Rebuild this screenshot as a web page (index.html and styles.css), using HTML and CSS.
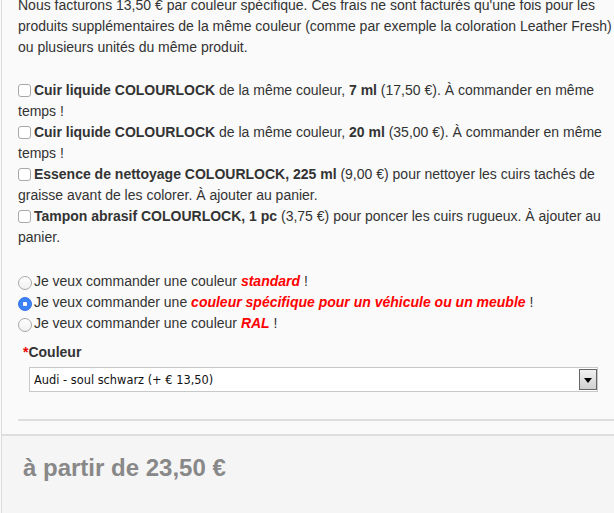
FILE: index.html
```html
<!DOCTYPE html>
<html lang="fr">
<head>
    <meta charset="UTF-8">
    <meta name="viewport" content="width=device-width, initial-scale=1.0">
    <title>Couleur spécifique</title>
    <link rel="stylesheet" href="styles.css">
</head>
<body>

    <div class="page">
        <!-- Options du produit -->
        <div class="options">
            <p class="intro">Nous facturons 13,50 € par couleur spécifique. Ces frais ne sont facturés qu'une fois pour les produits supplémentaires de la même couleur (comme par exemple la coloration Leather Fresh) ou plusieurs unités du même produit.</p>

            <div class="extras">
                <label><input type="checkbox"> <b>Cuir liquide COLOURLOCK</b> de la même couleur, <b>7 ml</b> (17,50 €). À commander en même temps !</label>
                <label><input type="checkbox"> <b>Cuir liquide COLOURLOCK</b> de la même couleur, <b>20 ml</b> (35,00 €). À commander en même temps !</label>
                <label><input type="checkbox"> <b>Essence de nettoyage COLOURLOCK, 225 ml</b> (9,00 €) pour nettoyer les cuirs tachés de graisse avant de les colorer. À ajouter au panier.</label>
                <label><input type="checkbox"> <b>Tampon abrasif COLOURLOCK, 1 pc</b> (3,75 €) pour poncer les cuirs rugueux. À ajouter au panier.</label>
            </div>

            <div class="choix">
                <label><input type="radio" name="type"> Je veux commander une couleur <em>standard</em> !</label>
                <label><input type="radio" name="type" checked> Je veux commander une <em>couleur spécifique pour un véhicule ou un meuble</em> !</label>
                <label><input type="radio" name="type"> Je veux commander une couleur <em>RAL</em> !</label>
            </div>

            <div class="champ">
                <div class="champ-titre"><span class="requis">*</span>Couleur</div>
                <div class="select-box">
                    <select>
                        <option>Audi - soul schwarz (+ € 13,50)</option>
                    </select>
                    <span class="select-btn"></span>
                </div>
            </div>

            <div class="separateur"></div>
        </div>

        <!-- Prix -->
        <div class="prix">
            <h2>à partir de 23,50 €</h2>
            <p class="prix-note">incl. TVA, plus frais d'expédition</p>
        </div>
    </div>

</body>
</html>
```

FILE: styles.css
```css
/* Estilos generales */
* {
    box-sizing: border-box;
}

body {
    font-family: "Liberation Sans", Arial, sans-serif;
    font-size: 14px;
    line-height: 21px;
    color: #333;
    margin: 0;
    padding: 0;
    background-color: #fafafa;
    overflow: hidden;
    height: 513px;
}

.page {
    width: 640px;
    margin-left: 1px;
    margin-top: -5px;
    border-left: 1px solid #dcdcdc;
}

.options {
    padding: 0 0 0 16px;
    background-color: #fafafa;
}

.intro {
    margin: 0 0 22px;
    width: 600px;
}

.extras label,
.choix label {
    display: block;
    width: 600px;
}

.extras {
    margin-bottom: 23px;
}

input[type="checkbox"] {
    appearance: none;
    width: 13px;
    height: 13px;
    margin: 0 -1px 0 0;
    border: 1px solid #a8a8a8;
    border-radius: 3px;
    background: #fff;
    vertical-align: -2px;
}

input[type="radio"] {
    appearance: none;
    width: 14px;
    height: 14px;
    margin: 0 -2px 0 0;
    border: 1px solid #a8a8a8;
    border-radius: 50%;
    background: linear-gradient(#fff, #f0f0f0);
    vertical-align: -4px;
}

input[type="radio"]:checked {
    border-color: #2f74e8;
    background: radial-gradient(circle, #fff 0 2px, #3b82f6 2.5px);
}

em {
    color: #f00;
    font-weight: bold;
}

.champ {
    padding: 8px 0 0 5px;
}

.champ-titre {
    font-weight: bold;
    margin-bottom: 4px;
}

.requis {
    color: #e00;
}

.select-box {
    position: relative;
    width: 569px;
    margin-left: 6px;
}

select {
    appearance: none;
    display: block;
    width: 100%;
    height: 25px;
    padding: 0 4px;
    border: 1px solid #c8c8c8;
    border-radius: 0;
    background: #fff;
    font-family: "DejaVu Sans", Verdana, sans-serif;
    font-size: 11.4px;
    color: #111;
}

/* bouton de la liste */
.select-btn {
    position: absolute;
    top: 2px;
    right: 1px;
    width: 18px;
    height: 21px;
    border: 1px solid #666;
    background: linear-gradient(#f2f2f2, #cfcfcf);
}

.select-btn::after {
    content: "";
    position: absolute;
    left: 4px;
    top: 8px;
    border-left: 4px solid transparent;
    border-right: 4px solid transparent;
    border-top: 5px solid #000;
}

.separateur {
    margin-top: 27px;
    height: 15px;
    border-top: 2px solid #dedede;
}

.prix {
    background-color: #f5f5f5;
    border-top: 2px solid #dedede;
    padding: 17px 0 0 21px;
    height: 200px;
}

.prix h2 {
    margin: 0;
    font-size: 24px;
    line-height: 30px;
    color: #888;
}

.prix-note {
    margin: 24px 0 0 14px;
    font-size: 13px;
    color: #999;
}
```
